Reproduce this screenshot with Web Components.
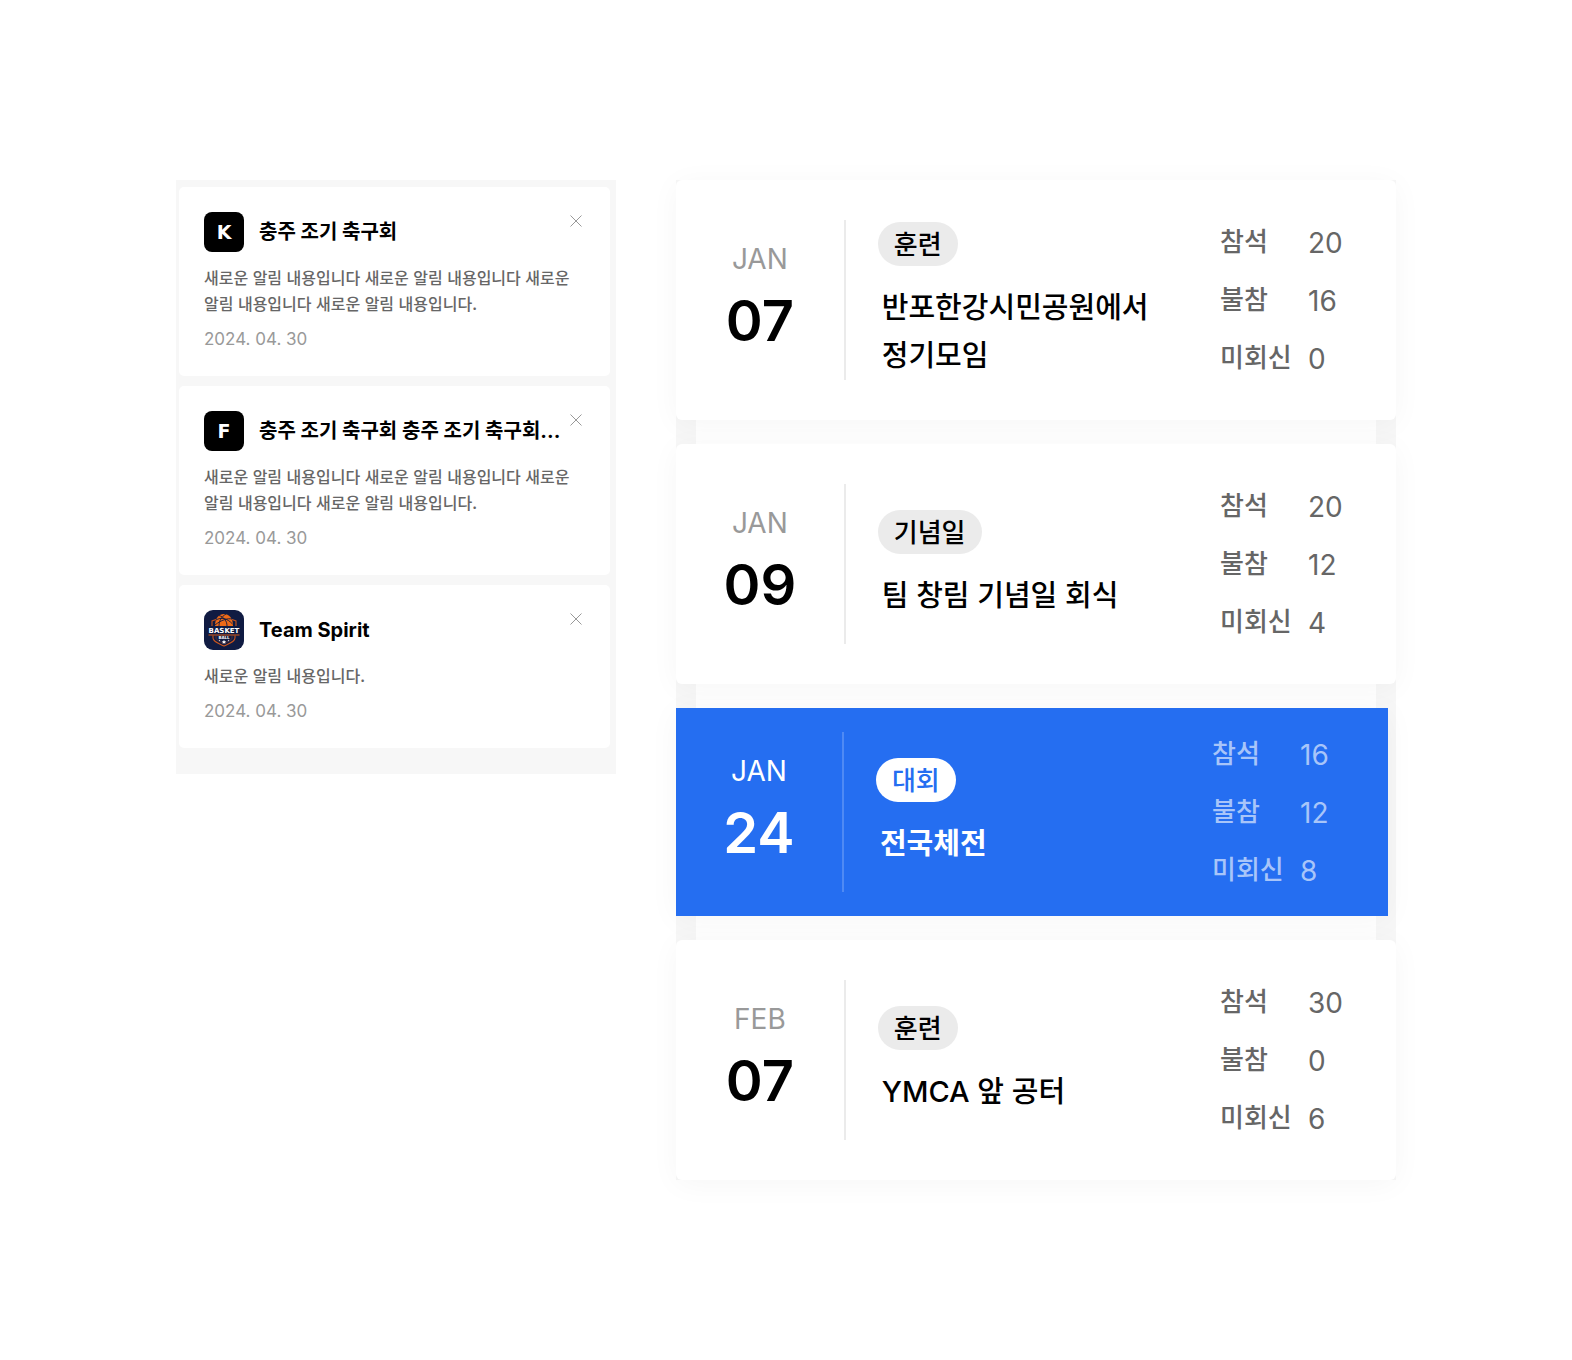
<!DOCTYPE html>
<html lang="ko">
<head>
<meta charset="utf-8">
<meta name="viewport" content="width=device-width, initial-scale=1">
<title>Team Spirit</title>
<style>
  body {
    margin: 0;
    background: #fff;
    color: #000;
    font-family: "Noto Sans CJK KR", "Noto Sans CJK JP", sans-serif;
  }
  main {
    display: grid;
    grid-template-columns: minmax(0, 11fr) minmax(0, 18fr);
    align-items: start;
    gap: 60px;
    padding: 180px 176px;
  }
</style>
</head>
<body>
<main>
  <notice-panel>
    <notice-card date="2024. 04. 30">
      <team-mark slot="mark">K</team-mark>
      <span slot="team">충주 조기 축구회</span>
      새로운 알림 내용입니다 새로운 알림 내용입니다 새로운 알림 내용입니다 새로운 알림 내용입니다.
    </notice-card>
    <notice-card date="2024. 04. 30">
      <team-mark slot="mark">F</team-mark>
      <span slot="team">충주 조기 축구회 충주 조기 축구회...</span>
      새로운 알림 내용입니다 새로운 알림 내용입니다 새로운 알림 내용입니다 새로운 알림 내용입니다.
    </notice-card>
    <notice-card date="2024. 04. 30">
      <basket-mark slot="mark"></basket-mark>
      <span slot="team">Team Spirit</span>
      새로운 알림 내용입니다.
    </notice-card>
  </notice-panel>

  <schedule-list>
    <schedule-card month="JAN" day="07" tag="훈련" yes="20" no="16" pending="0">반포한강시민공원에서 정기모임</schedule-card>
    <schedule-card month="JAN" day="09" tag="기념일" yes="20" no="12" pending="4">팀 창림 기념일 회식</schedule-card>
    <schedule-card active month="JAN" day="24" tag="대회" yes="16" no="12" pending="8">전국체전</schedule-card>
    <schedule-card month="FEB" day="07" tag="훈련" yes="30" no="0" pending="6">YMCA 앞 공터</schedule-card>
  </schedule-list>
</main>

<script>
// notice-panel
class NoticePanel extends HTMLElement {
  constructor() {
    super();
    this.attachShadow({ mode: 'open' }).innerHTML = `
      <style>
        :host {
          display: flex;
          flex-direction: column;
          gap: 10px;
          padding: 7px 6px 26px 3px;
          background: #f7f7f7;
        }
      </style>
      <slot></slot>
    `;
  }
}

// team-mark: black tile with the team's initial
class TeamMark extends HTMLElement {
  constructor() {
    super();
    this.attachShadow({ mode: 'open' }).innerHTML = `
      <style>
        :host {
          display: grid;
          place-items: center;
          width: 40px;
          height: 40px;
          border-radius: 8px;
          background: #000;
          color: #fff;
          font: bold 19px/40px "DejaVu Sans", sans-serif;
        }
      </style>
      <slot></slot>
    `;
  }
}

// basket-mark: basketball crest
class BasketMark extends HTMLElement {
  constructor() {
    super();
    this.attachShadow({ mode: 'open' }).innerHTML = `
      <style>
        :host { display: block; width: 40px; height: 40px; }
        svg { display: block; }
        text { font-family: "DejaVu Sans", sans-serif; font-weight: bold; fill: #fff; text-anchor: middle; }
      </style>
      <svg width="40" height="40" viewBox="0 0 40 40" aria-hidden="true">
        <rect width="40" height="40" rx="9" fill="#101b42"/>
        <g fill="none" stroke="#c9541c" stroke-width="1.1">
          <path d="M8 16V11L12 9.500M32 16V11L28 9.500"/>
          <path d="M4.500 25H35.500"/>
          <path d="M9 25.500V28C9 31.500 14 33 20 36C26 33 31 31.500 31 28V25.500"/>
          <path d="M12 26V28C12 30 16 31.500 20 33.500C24 31.500 28 30 28 28V26" stroke="#7d4238" stroke-width=".6"/>
        </g>
        <path d="M11 16C11 8 15 4 20 4S29 8 29 16Z" fill="#ee6a17"/>
        <g fill="none" stroke="#101b42" stroke-width=".9">
          <path d="M12 10C17 7 23 8 28.500 14"/>
          <path d="M15 5.500C20 7 23 11 23 16"/>
          <path d="M22 4C17 7 15 11 15 16"/>
          <path d="M11 15C17 10 24 8 28 9"/>
        </g>
        <rect x="5" y="16" width="30" height="8" fill="#101b42"/>
        <text x="20" y="23" font-size="7">BASKET</text>
        <text x="20" y="29" font-size="4">BALL</text>
        <path d="M20 29.800L20.700 31.200L22.200 31.400L21.100 32.400L21.400 33.800L20 33.100L18.600 33.800L18.900 32.400L17.800 31.400L19.300 31.200Z" fill="#fff"/>
        <circle cx="15.500" cy="30.500" r=".7" fill="#b9bfd2"/>
        <circle cx="24.500" cy="30.500" r=".7" fill="#b9bfd2"/>
      </svg>
    `;
  }
}

// notice-card
class NoticeCard extends HTMLElement {
  constructor() {
    super();
    const shadow = this.attachShadow({ mode: 'open' });
    shadow.innerHTML = `
      <style>
        :host {
          display: block;
          padding: 25px 25px 24px;
          border-radius: 5px;
          background: #fff;
        }
        header { display: flex; align-items: center; gap: 15px; }
        h2 {
          flex: 1;
          min-width: 0;
          margin: 0;
          font: 700 20px/40px Inter, "Noto Sans CJK KR", sans-serif;
          white-space: nowrap;
        }
        button {
          align-self: flex-start;
          display: block;
          width: 18px;
          height: 18px;
          padding: 3px;
          border: 0;
          background: none;
          cursor: pointer;
        }
        svg { display: block; stroke: #999; fill: none; }
        p {
          margin: 12px 0 10px;
          color: #666;
          font-size: 16px;
          font-weight: 500;
          line-height: 26px;
          word-break: keep-all;
        }
        time {
          display: block;
          color: #999;
          font: 400 17px/26px Inter, sans-serif;
        }
      </style>
      <header>
        <slot name="mark"></slot>
        <h2><slot name="team"></slot></h2>
        <button type="button" aria-label="닫기">
          <svg width="12" height="12" viewBox="0 0 12 12"><path d="M.5 .5L11.500 11.500M11.500 .5L.5 11.500"></path></svg>
        </button>
      </header>
      <p><slot></slot></p>
      <time></time>
    `;
    shadow.querySelector('button').addEventListener('click', () => this.remove());
  }

  connectedCallback() {
    this.shadowRoot.querySelector('time').textContent = this.getAttribute('date');
  }
}

// schedule-list
class ScheduleList extends HTMLElement {
  constructor() {
    super();
    this.attachShadow({ mode: 'open' }).innerHTML = `
      <style>
        :host {
          display: flex;
          flex-direction: column;
          gap: 24px;
          background: linear-gradient(90deg, #f7f7f7 20px, #fff 20px calc(100% - 20px), #f7f7f7 calc(100% - 20px));
        }
      </style>
      <slot></slot>
    `;
  }
}

// schedule-card
class ScheduleCard extends HTMLElement {
  constructor() {
    super();
    this.attachShadow({ mode: 'open' }).innerHTML = `
      <style>
        :host {
          display: grid;
          grid-template-columns: 23.3% minmax(0, 1fr) 176px;
          padding: 40px 0;
          border-radius: 6px;
          background: #fff;
          box-shadow: 0 4px 30px rgba(0, 0, 0, 0.04);
          --month: #999;
          --line: #ebebeb;
          --tag-bg: #ebebeb;
          --tag: #000;
          --stat: #666;
          --weight: 500;
        }
        :host([active]) {
          margin-right: 8px;
          padding: 24px 0;
          border-radius: 0;
          background: #256ef1;
          color: #fff;
          --month: #fff;
          --line: #4f8af4;
          --tag-bg: #fff;
          --tag: #256ef1;
          --stat: #a8c5f9;
          --weight: 700;
        }
        time {
          display: flex;
          flex-direction: column;
          align-items: center;
          justify-content: center;
          gap: 8px;
          font-family: Inter, sans-serif;
        }
        .month { color: var(--month); font-size: 28px; line-height: 34px; }
        .day { font-size: 56px; font-weight: 600; line-height: 74px; }
        .event {
          display: flex;
          flex-direction: column;
          align-items: flex-start;
          justify-content: center;
          gap: 16px;
          min-height: 160px;
          box-sizing: border-box;
          padding-left: 32px;
          border-left: 2px solid var(--line);
        }
        .tag {
          padding: 0 16px 2px;
          border-radius: 22px;
          background: var(--tag-bg);
          color: var(--tag);
          font-size: 26px;
          font-weight: 500;
          line-height: 42px;
        }
        h3 {
          margin: 2px 0 -2px;
          padding-left: 4px;
          font-family: Inter, "Noto Sans CJK KR", sans-serif;
          font-size: 29px;
          font-weight: var(--weight);
          line-height: 48px;
          word-break: keep-all;
        }
        dl {
          display: grid;
          grid-template-columns: 72px 1fr;
          align-content: center;
          gap: 16px;
          margin: 0;
          padding-top: 2px;
          color: var(--stat);
        }
        dt, dd { margin: 0; }
        dt { font-size: 26px; font-weight: 500; line-height: 36px; }
        dd { font-family: Inter, sans-serif; font-size: 28px; line-height: 42px; }
      </style>
      <time><span class="month"></span><span class="day"></span></time>
      <div class="event">
        <span class="tag"></span>
        <h3><slot></slot></h3>
      </div>
      <dl>
        <dt>참석</dt><dd class="yes"></dd>
        <dt>불참</dt><dd class="no"></dd>
        <dt>미회신</dt><dd class="pending"></dd>
      </dl>
    `;
  }

  connectedCallback() {
    for (const name of ['month', 'day', 'tag', 'yes', 'no', 'pending']) {
      this.shadowRoot.querySelector('.' + name).textContent = this.getAttribute(name);
    }
  }
}

customElements.define('notice-panel', NoticePanel);
customElements.define('team-mark', TeamMark);
customElements.define('basket-mark', BasketMark);
customElements.define('notice-card', NoticeCard);
customElements.define('schedule-list', ScheduleList);
customElements.define('schedule-card', ScheduleCard);
</script>
</body>
</html>
